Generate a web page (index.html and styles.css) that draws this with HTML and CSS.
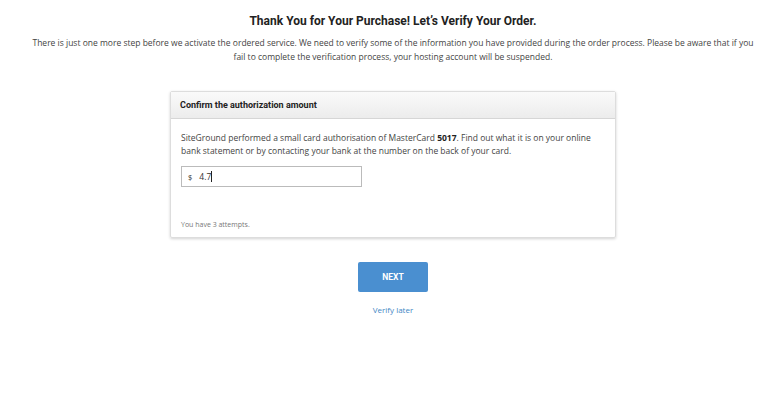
FILE: index.html
```html
<!DOCTYPE html>
<html lang="en">
<head>
    <meta charset="UTF-8">
    <meta name="viewport" content="width=device-width, initial-scale=1.0">
    <title>Verify Your Order</title>
    <link rel="stylesheet" href="styles.css">
</head>
<body>
    <div class="page">
        <h1 class="title">Thank You for Your Purchase! Let’s Verify Your Order.</h1>
        <p class="intro">There is just one more step before we activate the ordered service. We need to verify some of the information you have provided during the order process. Please be aware that if you fail to complete the verification process, your hosting account will be suspended.</p>

        <div class="card">
            <div class="card-head">Confirm the authorization amount</div>
            <div class="card-body">
                <p class="info">SiteGround performed a small card authorisation of MasterCard <b>5017</b>. Find out what it is on your online bank statement or by contacting your bank at the number on the back of your card.</p>
                <div class="amount">
                    <span class="currency">$</span>
                    <span class="value">4.7</span><span class="caret"></span>
                </div>
                <div class="attempts">You have 3 attempts.</div>
            </div>
        </div>

        <button class="next">NEXT</button>
        <a class="later" href="#">Verify later</a>
    </div>
</body>
</html>
```

FILE: styles.css
```css
body {
    margin: 0;
    background: #fff;
    font-family: "Open Sans", sans-serif;
    color: #333;
}
.page {
    display: flex;
    flex-direction: column;
    align-items: center;
    padding: 14px 0 0 25px;
}
.title {
    margin: 0;
    font-family: Roboto, sans-serif;
    font-size: 12px;
    font-weight: 700;
    color: #222;
    line-height: 14px;
}
.intro {
    margin: 8px 0 0;
    width: 730px;
    text-align: center;
    font-size: 8.5px;
    line-height: 14px;
    color: #444;
}
.card {
    margin-top: 27px;
    width: 444px;
    border: 1px solid #ddd;
    border-radius: 2px;
    box-shadow: 0 1px 3px rgba(0, 0, 0, 0.18);
}
.card-head {
    height: 26px;
    padding: 0 9px;
    display: flex;
    align-items: center;
    background: linear-gradient(#fafafa, #ececec);
    border-bottom: 1px solid #d6d6d6;
    font-family: Roboto, sans-serif;
    font-size: 9px;
    font-weight: 700;
    color: #222;
}
.card-body {
    padding: 12px 10px 8px;
}
.info {
    margin: 0;
    font-size: 8.5px;
    line-height: 13px;
    color: #444;
}
.info b {
    color: #222;
}
.amount {
    margin-top: 9px;
    width: 181px;
    height: 21px;
    border: 1px solid #bbb;
    display: flex;
    align-items: center;
    padding: 0 6px;
    box-sizing: border-box;
    font-size: 8.5px;
    color: #333;
}
.currency {
    margin-right: 7px;
    font-size: 7.5px;
}
.caret {
    width: 1px;
    height: 11px;
    background: #222;
}
.attempts {
    margin-top: 33px;
    font-size: 7px;
    line-height: 9px;
    color: #777;
}
.next {
    margin-top: 24px;
    width: 70px;
    height: 30px;
    border: 0;
    border-radius: 2px;
    background: #4a8fd0;
    color: #fff;
    font-family: Roboto, sans-serif;
    font-size: 8.5px;
    font-weight: 700;
}
.later {
    margin-top: 12px;
    font-size: 8px;
    color: #3f88c5;
    text-decoration: none;
}
```
